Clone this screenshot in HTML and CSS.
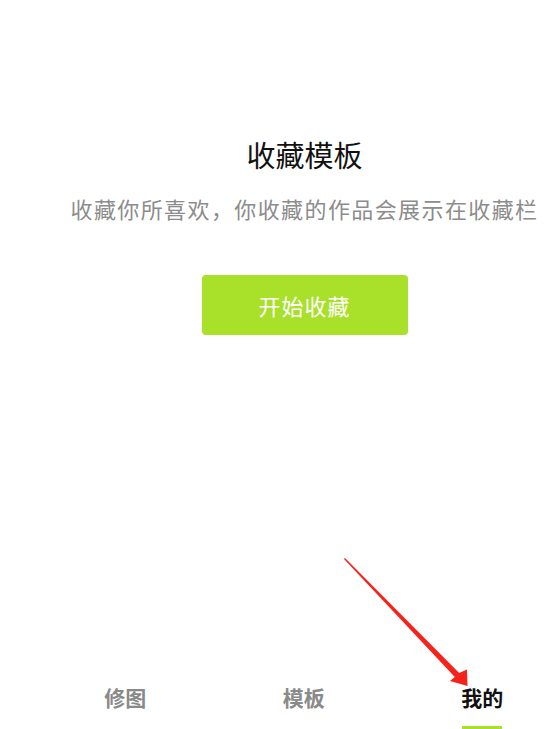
FILE: index.html
```html
<!DOCTYPE html>
<html lang="zh-CN">
<head>
    <meta charset="UTF-8">
    <meta name="viewport" content="width=device-width, initial-scale=1.0">
    <title>收藏模板</title>
    <link rel="stylesheet" href="styles.css">
</head>
<body>

    <!-- Empty state -->
    <div class="empty">
        <h1>收藏模板</h1>
        <p>收藏你所喜欢，你收藏的作品会展示在收藏栏</p>
        <button class="start-btn">开始收藏</button>
    </div>

    <!-- Bottom tabs -->
    <nav class="tabbar">
        <div class="tab">修图</div>
        <div class="tab">模板</div>
        <div class="tab active">我的<span class="tab-line"></span></div>
    </nav>

    <!-- Annotation arrow -->
    <svg class="arrow" width="553" height="729" viewBox="0 0 553 729">
        <polygon points="345,558 459.2,672.9 467,669.5 467.5,686 450,681 454.8,677.1 344,559" fill="#f5231b"/>
    </svg>

</body>
</html>
```

FILE: styles.css
```css
html, body {
    margin: 0;
    padding: 0;
    height: 100%;
}
body {
    font-family: 'Noto Sans CJK SC', 'Noto Sans', sans-serif;
    background-color: #ffffff;
    color: #111;
    display: flex;
    flex-direction: column;
    overflow: hidden;
    position: relative;
}
.empty {
    flex: 1;
    display: flex;
    flex-direction: column;
    align-items: center;
    width: 497px;
    margin-left: 56px;
    padding-top: 134px;
}
.empty h1 {
    font-size: 29px;
    font-weight: 400;
    line-height: 40px;
    margin: 0;
    color: #111;
}
.empty p {
    font-size: 22px;
    line-height: 30px;
    letter-spacing: 1.4px;
    color: #8c8c8c;
    margin: 19px 0 0;
    white-space: nowrap;
}
.start-btn {
    margin-top: 52px;
    width: 206px;
    height: 60px;
    border: none;
    border-radius: 4px;
    background-color: #a8e02a;
    color: #ffffff;
    font-family: inherit;
    font-size: 22px;
    letter-spacing: 1px;
    cursor: pointer;
}
.tabbar {
    display: flex;
    padding-left: 36px;
    height: 47px;
}
.tab {
    width: 178.5px;
    flex-shrink: 0;
    display: flex;
    flex-direction: column;
    align-items: center;
    font-size: 21px;
    font-weight: 700;
    line-height: 30px;
    color: #8a8a8a;
}
.tab.active {
    color: #111;
}
.tab-line {
    display: block;
    width: 40px;
    height: 3px;
    margin-top: 14px;
    background-color: #a8e02a;
}
.arrow {
    position: absolute;
    left: 0;
    top: 0;
    pointer-events: none;
}
```
